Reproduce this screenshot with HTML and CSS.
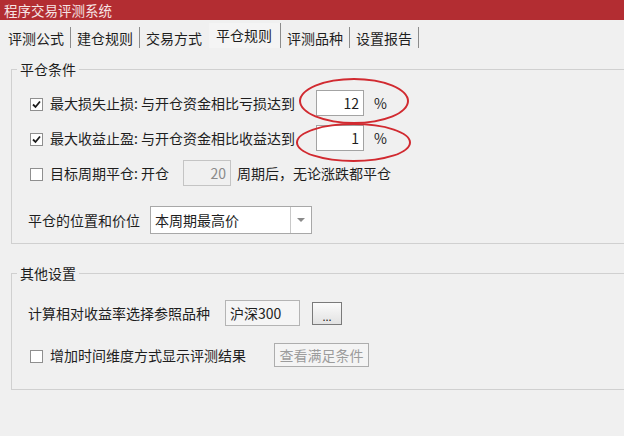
FILE: index.html
```html
<!DOCTYPE html>
<html lang="zh-CN">
<head>
    <meta charset="UTF-8">
    <title>程序交易评测系统</title>
    <link rel="stylesheet" href="styles.css">
</head>
<body>
    <div class="titlebar">程序交易评测系统</div>
    <ul class="tabs">
        <li>评测公式</li>
        <li>建仓规则</li>
        <li class="no-line">交易方式</li>
        <li class="active">平仓规则</li>
        <li>评测品种</li>
        <li>设置报告</li>
    </ul>

    <!-- 平仓条件 -->
    <fieldset class="group group-close">
        <legend>平仓条件</legend>
        <div class="row">
            <span class="check"><svg width="11" height="11" viewBox="0 0 11 11"><path d="M2 5.5 L4.5 8 L9 2.5" fill="none" stroke="#1c1c1c" stroke-width="1.8"/></svg></span>
            <span class="label w-loss">最大损失止损: 与开仓资金相比亏损达到</span>
            <span class="field">
                <span class="num">12</span>
                <span class="ring ring-a"></span>
            </span>
            <span class="unit">%</span>
        </div>
        <div class="row gap-s">
            <span class="check"><svg width="11" height="11" viewBox="0 0 11 11"><path d="M2 5.5 L4.5 8 L9 2.5" fill="none" stroke="#1c1c1c" stroke-width="1.8"/></svg></span>
            <span class="label w-loss">最大收益止盈: 与开仓资金相比收益达到</span>
            <span class="field">
                <span class="num">1</span>
                <span class="ring ring-b"></span>
            </span>
            <span class="unit">%</span>
        </div>
        <div class="row gap-s">
            <span class="check"></span>
            <span class="label w-period">目标周期平仓: 开仓</span>
            <span class="field disabled">
                <span class="num">20</span>
            </span>
            <span class="after">周期后，无论涨跌都平仓</span>
        </div>
        <div class="row plain gap-l">
            <span class="label w-pos">平仓的位置和价位</span>
            <div class="select">
                <span class="select-text">本周期最高价</span>
                <span class="select-btn"><i class="arrow"></i></span>
            </div>
        </div>
    </fieldset>

    <!-- 其他设置 -->
    <fieldset class="group group-other">
        <legend>其他设置</legend>
        <div class="row plain">
            <span class="label w-ref">计算相对收益率选择参照品种</span>
            <span class="field ref">沪深300</span>
            <button class="btn btn-dots">...</button>
        </div>
        <div class="row row-btn">
            <span class="check"></span>
            <span class="label w-time">增加时间维度方式显示评测结果</span>
            <button class="btn btn-off" disabled>查看满足条件</button>
        </div>
    </fieldset>
</body>
</html>
```

FILE: styles.css
```css
body{
    margin:0;
    height:436px;
    overflow:hidden;
    background:#f0f0f0;
    color:#1e1e1e;
    font-family:"Noto Sans CJK SC", "Liberation Sans", sans-serif;
    font-size:14px;
}
.titlebar{
    height:20px;
    line-height:20px;
    padding-left:4px;
    background:#b32d32;
    color:#f6e4e4;
    font-size:13.5px;
}

/* 选项卡 */
.tabs{
    display:flex;
    align-items:flex-end;
    height:25px;
    margin:3px 0 0;
    padding:0 0 0 2px;
    list-style:none;
}
.tabs li{
    height:21px;
    line-height:22px;
    padding:0 6px;
    border-right:1px solid #8c8c8c;
}
.tabs .no-line{
    border-right-color:transparent;
}
.tabs .active{
    height:25px;
    line-height:24px;
    padding:0 8px 0 7px;
    background:#f4f4f4;
}

/* 分组框 */
.group{
    margin:13px -20px 0 11px;
    padding:13px 0 9px 18px;
    border:1px solid #d0d0d0;
}
.group legend{
    margin-left:-13px;
    padding:0 3px;
    line-height:16px;
    font-size:14px;
}
.group-other{
    margin-top:21px;
    padding-top:19px;
    padding-bottom:22px;
}

.row{
    display:flex;
    align-items:center;
    height:26px;
}
.row.plain{
    margin-left:-2px;
}
.gap-s{
    margin-top:9px;
}
.gap-l{
    margin-top:20px;
    height:28px;
}
.row-btn{
    margin-top:17px;
    height:24px;
}

.check{
    display:flex;
    align-items:center;
    justify-content:center;
    width:11px;
    height:11px;
    border:1px solid #8f8f8f;
    background:#fff;
    margin-right:7px;
    margin-top:2px;
}
.label{
    flex:none;
    white-space:nowrap;
}
.w-loss{ width:266px; }
.w-period{ width:133px; }
.w-pos{ width:122px; }
.w-ref{ width:197px; }
.w-time{ width:224px; }

.field{
    position:relative;
    box-sizing:border-box;
    width:48px;
    height:26px;
    line-height:24px;
    border:1px solid #a3a3a3;
    background:#fff;
    text-align:right;
    padding-right:4px;
}
.field.disabled{
    background:#f0f0f0;
    border-color:#c4c4c4;
    color:#8a8a8a;
}
.field.ref{
    width:75px;
    text-align:left;
    padding-left:4px;
    background:#f5f5f5;
    border-color:#b4b4b4;
}
.unit{
    margin-left:10px;
}
.after{
    margin-left:6px;
}

/* 标注的红圈 */
.ring{
    position:absolute;
    border:2px solid #d12a30;
    border-radius:50%;
}
.ring-a{
    left:-18px;
    top:-13px;
    width:106px;
    height:42px;
}
.ring-b{
    left:-21px;
    top:-3px;
    width:111px;
    height:35px;
}

.select{
    display:flex;
    box-sizing:border-box;
    width:162px;
    height:28px;
    border:1px solid #a8a8a8;
    background:#fff;
}
.select-text{
    flex:1;
    line-height:26px;
    padding-left:4px;
}
.select-btn{
    display:flex;
    align-items:center;
    justify-content:center;
    width:20px;
    border-left:1px solid #c8c8c8;
}
.arrow{
    width:0;
    height:0;
    border-left:4px solid transparent;
    border-right:4px solid transparent;
    border-top:4px solid #8a8a8a;
}

.btn{
    box-sizing:border-box;
    margin:0;
    padding:0;
    font-family:inherit;
}
.btn-dots{
    width:30px;
    height:23px;
    margin-left:12px;
    border:1px solid #7a7a7a;
    background:linear-gradient(#fbfbfb, #e2e2e2);
    font-size:11px;
    line-height:26px;
    color:#222;
}
.btn-off{
    width:95px;
    height:24px;
    border:1px solid #adadad;
    background:#f4f4f4;
    color:#9c9c9c;
    font-size:14px;
    line-height:20px;
}
```
